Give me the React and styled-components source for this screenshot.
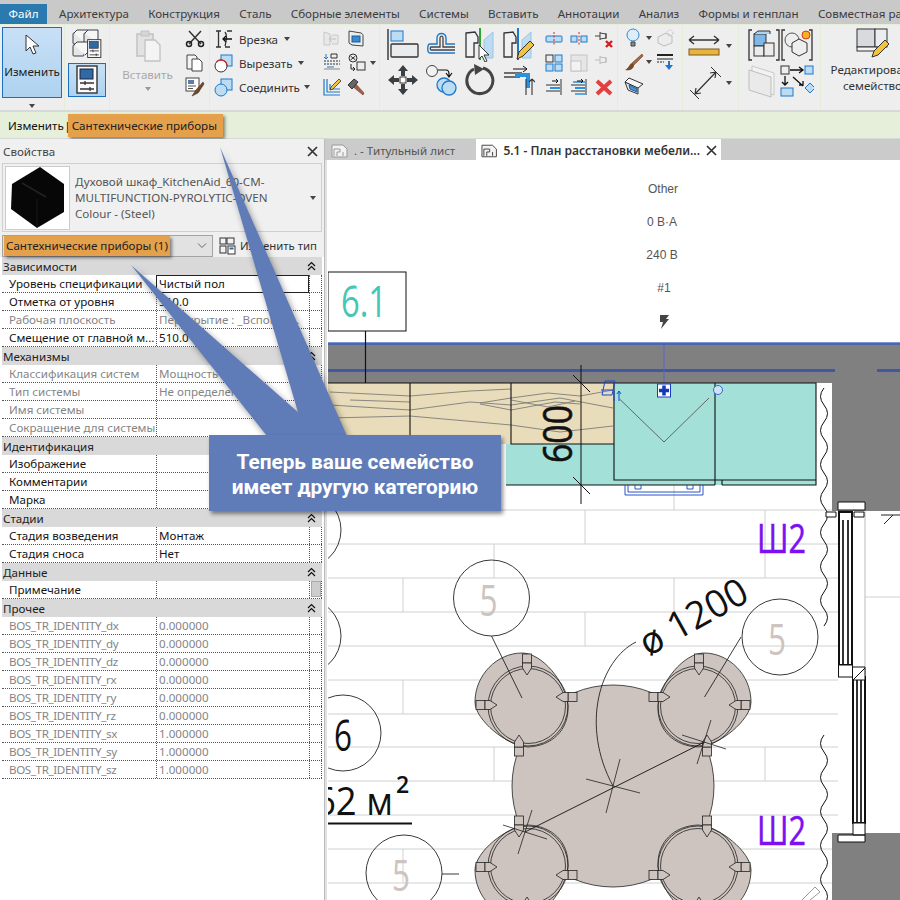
import React from 'react';
import styled, { createGlobalStyle } from 'styled-components';

const UI_FONT = '"Noto Sans", "Open Sans", "Liberation Sans", sans-serif';

const GlobalStyle = createGlobalStyle`
  html, body { margin: 0; padding: 0; background: #fff; }
  body { font-family: ${UI_FONT}; font-size: 12px; color: #222; }
`;

const Page = styled.div`
  position: relative;
  width: 900px;
  height: 900px;
  overflow: hidden;
  background: #fff;
`;

/* ---------- menu ---------- */
const MenuBar = styled.div`
  display: flex;
  align-items: flex-end;
  gap: 19.2px;
  height: 24px;
  background: #c9c9c9;
  white-space: nowrap;
`;

const MenuItem = styled.div`
  flex: none;
  height: 20px;
  line-height: 20px;
  font-size: 11.6px;
  color: #3c3c3c;
  ${(p) => p.$first && 'width: 47px; margin-right: -7.2px; text-align: center; background: #2a7ab0; color: #fff;'}
`;

/* ---------- ribbon ---------- */
const Ribbon = styled.div`
  display: flex;
  height: 88px;
  background: #eeeeee;
  border-top: 1px solid #e5eed8;
  box-sizing: border-box;
  border-bottom: 2px solid #d8d8d8;
`;

const Group = styled.div`
  flex: none;
  width: ${(p) => p.$w}px;
  box-sizing: border-box;
  display: flex;
  border-right: 1px solid #e4edd8;
  padding-left: ${(p) => p.$pad || 0}px;
  padding-top: ${(p) => p.$top || 0}px;
  gap: ${(p) => p.$gap || 0}px;
  flex-direction: ${(p) => (p.$col ? 'column' : 'row')};
  align-items: ${(p) => (p.$col ? 'center' : 'flex-start')};
`;

const ModifyButton = styled.div`
  width: 60px;
  height: 71px;
  margin-top: 2px;
  box-sizing: border-box;
  border: 1px solid #1a6fc0;
  background: linear-gradient(#c8e0f6, #aed2f0);
  display: flex;
  flex-direction: column;
  align-items: center;
  padding-top: 6px;
  gap: 8px;
  font-size: 11.6px;
  color: #222;
`;

const PropsButton = styled.div`
  width: 38px;
  height: 34px;
  margin-top: 5px;
  box-sizing: border-box;
  border: 1px solid #1a6fc0;
  background: linear-gradient(#c8e0f6, #aed2f0);
  display: flex;
  align-items: center;
  justify-content: center;
`;

const Caret = styled.span`
  flex: none;
  display: inline-block;
  width: 0;
  height: 0;
  border-left: 3.5px solid transparent;
  border-right: 3.5px solid transparent;
  border-top: 4px solid ${(p) => p.$color || '#444'};
  margin: ${(p) => p.$m || '0'};
`;

const PasteColumn = styled.div`
  width: 47px;
  margin: 5px 0 0 14px;
  display: flex;
  flex-direction: column;
  align-items: center;
  color: #a8a8a8;
  font-size: 11.6px;
  gap: 5px;
`;

const ToolColumn = styled.div`
  display: flex;
  flex-direction: column;
  align-items: ${(p) => p.$align || 'center'};
  width: ${(p) => p.$w || 20}px;
  margin-left: ${(p) => p.$ml || 0}px;
  padding-top: ${(p) => p.$top ?? 4}px;
  gap: ${(p) => p.$gap ?? 4}px;
`;

const ToolRow = styled.div`
  display: flex;
  align-items: center;
  height: ${(p) => p.$h || 20}px;
  gap: ${(p) => p.$gap || 0}px;
  font-size: 11.6px;
  color: #333;
  white-space: nowrap;
`;

const ToolLabel = styled.span`
  margin: 0 4px 0 5px;
`;

const IconGrid = styled.div`
  display: grid;
  grid-template-columns: ${(p) => p.$cols};
  grid-auto-rows: ${(p) => p.$row}px;
  place-items: center;
  padding-top: ${(p) => p.$top || 0}px;
  margin-left: ${(p) => p.$ml || 0}px;
`;

const EditFamily = styled.div`
  width: 96px;
  margin-left: 4px;
  padding-top: 3px;
  display: flex;
  flex-direction: column;
  align-items: center;
  gap: 4px;
  text-align: center;
  font-size: 11.6px;
  line-height: 16px;
  color: #333;
  white-space: nowrap;
`;

/* ---------- options bar ---------- */
const OptionsBar = styled.div`
  display: flex;
  align-items: center;
  height: 27px;
  padding-left: 8px;
  background: #e6efd9;
  border-bottom: 1px solid #d8d8d8;
  box-sizing: border-box;
  font-size: 11.6px;
  color: #111;
  white-space: nowrap;
  word-spacing: -2.5px;
`;

const OrangeTag = styled.span`
  display: inline-flex;
  align-items: center;
  height: ${(p) => p.$h}px;
  width: ${(p) => p.$w}px;
  box-sizing: border-box;
  margin-left: ${(p) => p.$ml || 0}px;
  padding-left: ${(p) => p.$pad || 4}px;
  background: #e4a04b;
  color: #222;
  box-shadow: 2px 2px 3px rgba(0, 0, 0, 0.45);
  white-space: nowrap;
  flex: none;
  word-spacing: normal;
`;

const Workspace = styled.div`
  display: flex;
  height: 761px;
`;

/* ---------- properties panel ---------- */
const Panel = styled.aside`
  flex: none;
  width: 325px;
  height: 100%;
  box-sizing: border-box;
  border-right: 1px solid #bbb;
  background: #fff;
`;

const PanelHead = styled.div`
  height: 24px;
  display: flex;
  align-items: center;
  justify-content: space-between;
  padding: 0 6px 0 3px;
  background: #f0f0f0;
  color: #444;
  font-size: 11.6px;
`;

const PanelTop = styled.div`
  background: #f0f0f0;
  padding: 0 2px 2px;
  height: 94px;
  box-sizing: border-box;
`;

const TypeBox = styled.div`
  height: 69px;
  box-sizing: border-box;
  display: flex;
  align-items: center;
  gap: 5px;
  padding-left: 2px;
  width: 320px;
  border: 1px solid #d0d0d0;
  color: #555;
  font-size: 11.6px;
  line-height: 16px;
`;

const Thumb = styled.div`
  flex: none;
  width: 65px;
  height: 64px;
  background: #fff;
  border: 1px solid #ccc;
  box-sizing: border-box;
  display: flex;
  align-items: center;
  justify-content: center;
`;

const TypeName = styled.div`
  flex: 1;
  white-space: nowrap;
  overflow: hidden;
`;

const SelectorRow = styled.div`
  display: flex;
  align-items: center;
  height: 23px;
  margin-top: 2px;
  gap: 6px;
`;

const Selector = styled.div`
  width: 211px;
  height: 22px;
  box-sizing: border-box;
  border: 1px solid #a4a4a4;
  background: #e2e2e2;
  display: flex;
  align-items: center;
  justify-content: space-between;
  padding: 0 4px 0 1px;
  font-size: 11.6px;
`;

const EditType = styled.div`
  display: flex;
  align-items: center;
  gap: 4px;
  font-size: 11.4px;
  color: #333;
  white-space: nowrap;
`;

const PropTable = styled.div`
  width: 320px;
  margin-left: 2px;
`;

const Section = styled.div`
  height: 18px;
  box-sizing: border-box;
  background: #d9d9d9;
  display: flex;
  align-items: center;
  justify-content: space-between;
  padding: 0 6px 0 1px;
  font-size: 11.6px;
  color: #222;
`;

const Row = styled.div`
  display: grid;
  grid-template-columns: 154px 153px 13px;
  height: 18px;
  box-sizing: border-box;
  border-bottom: 1px dotted #555;
  font-size: 11.6px;
  line-height: 17px;
  color: ${(p) => (p.$dim ? '#858585' : '#151515')};
  white-space: nowrap;
`;

const LabelCell = styled.div`
  padding-left: 7px;
  overflow: hidden;
  letter-spacing: ${(p) => (p.$tight ? '-0.38px' : 'normal')};
`;

const ValueCell = styled.div`
  border-left: 1px dotted #555;
  padding-left: 2px;
  overflow: hidden;
  ${(p) => p.$active && 'border: 1px solid #222; line-height: 15px; height: 18px; box-sizing: border-box; background: #fff; color: #111;'}
`;

const EdgeCell = styled.div`
  border-left: 1px dotted #555;
  border-right: 1px dotted #555;
  display: flex;
  justify-content: center;
`;

const ScrollThumb = styled.div`
  width: 10px;
  height: 16px;
  background: #cdcdcd;
  border: 1px solid #aaa;
  box-sizing: border-box;
`;

/* ---------- canvas ---------- */
const ViewArea = styled.section`
  flex: 1;
  min-width: 0;
  display: flex;
  flex-direction: column;
`;

const TabStrip = styled.div`
  flex: none;
  height: 21px;
  display: flex;
  background: #cbcbcb;
  padding-left: 4px;
  gap: 6px;
  font-size: 11.6px;
  white-space: nowrap;
`;

const Tab = styled.div`
  width: ${(p) => p.$w}px;
  box-sizing: border-box;
  display: flex;
  align-items: center;
  gap: 6px;
  padding: 2px 0 0 ${(p) => (p.$active ? 5 : 2)}px;
  background: ${(p) => (p.$active ? '#fff' : 'transparent')};
  color: ${(p) => (p.$active ? '#333' : '#555')};
  font-weight: ${(p) => (p.$active ? 600 : 400)};
  font-size: ${(p) => (p.$active ? 12 : 11.6)}px;
`;

const CloseMark = styled.span`
  margin-left: auto;
  margin-right: 4px;
  display: inline-flex;
`;

const Drawing = styled.svg`
  display: block;
  flex: none;
`;

/* ---------- callout overlay ---------- */
const Wedges = styled.svg`
  position: absolute;
  left: 0;
  top: 0;
  pointer-events: none;
  filter: drop-shadow(2px 3px 3px rgba(0, 0, 0, 0.4));
`;

const Callout = styled.div`
  position: absolute;
  left: 209px;
  top: 435px;
  width: 292px;
  height: 76px;
  box-sizing: border-box;
  padding-top: 3px;
  display: flex;
  align-items: center;
  justify-content: center;
  text-align: center;
  background: #5f7cb8;
  color: #fff;
  font-family: Roboto, "Liberation Sans", sans-serif;
  font-size: 20.8px;
  font-weight: 700;
  line-height: 25px;
  white-space: nowrap;
  box-shadow: 2px 3px 4px rgba(0, 0, 0, 0.45);
`;

/* ---------- icons ---------- */
const Ico = ({ w = 20, h = w, children }) => (
  <svg width={w} height={h} viewBox={`0 0 ${w} ${h}`} fill="none">
    {children}
  </svg>
);

const DK = '#3a3f44';
const BL = '#1f78c8';
const LB = '#bcdcf4';
const GR = '#e4e6e8';

const Cube = ({ x, y, s = 11, fill = GR }) => (
  <g stroke={DK} strokeWidth="1" fill={fill}>
    <rect x={x} y={y} width={s} height={s} rx="1" />
    <path d={`M${x + 1} ${y}l3-3h${s}v${s - 1}l-3 3`} fill="#f6f6f6" />
  </g>
);

const CursorIcon = () => (
  <Ico w={16} h={22}>
    <path d="M2 1v16l4-4 3 7 3-1-3-7h6z" fill="#fff" stroke="#333" />
  </Ico>
);

const SheetSliders = ({ s = 1 }) => (
  <g transform={`scale(${s})`}>
    <rect x="1" y="1" width="20" height="27" fill="#fafafa" stroke="#333" strokeWidth="1.4" />
    <rect x="4" y="4" width="13" height="10" fill="#2f6aa8" stroke="#223" />
    <path d="M4 18h14M4 24h14M9 16v4M14 22v4" stroke="#333" strokeWidth="1.3" />
  </g>
);

const BlocksProps = () => (
  <Ico w={30} h={30}>
    <Cube x={1} y={5} />
    <Cube x={12} y={5} s={10} />
    <Cube x={1} y={17} />
    <g transform="translate(15 11)">
      <SheetSliders s={0.66} />
    </g>
  </Ico>
);

const SmallBlocksProps = () => (
  <Ico w={17} h={18}>
    <rect x="1" y="1" width="6" height="6" fill="#f2f2f2" stroke="#333" />
    <rect x="8" y="1" width="7" height="6" fill="#f2f2f2" stroke="#333" />
    <rect x="1" y="9" width="6" height="7" fill="#f2f2f2" stroke="#333" />
    <rect x="9" y="9" width="7" height="8" fill="#fff" stroke="#333" />
    <rect x="10.500" y="10.500" width="4" height="2" fill="#2f6aa8" />
  </Ico>
);

const PropsIcon = () => (
  <Ico w={23} h={30}>
    <SheetSliders />
  </Ico>
);

const PasteIcon = () => (
  <Ico w={26} h={32}>
    <path d="M2 4h16v22H2z" fill="#e2e2e2" stroke="#c2c2c2" strokeWidth="1.5" />
    <path d="M6 1h8v5H6z" fill="#d6d6d6" stroke="#c2c2c2" />
    <path d="M10 10h10l5 5v16H10z" fill="#f4f4f4" stroke="#c2c2c2" strokeWidth="1.3" />
  </Ico>
);

const CutIcon = () => (
  <Ico>
    <path d="M4 2l12 13M16 2L4 15" stroke="#333" strokeWidth="1.5" />
    <circle cx="4" cy="15" r="2.5" stroke="#222" strokeWidth="1.5" />
    <circle cx="16" cy="15" r="2.5" stroke="#222" strokeWidth="1.5" />
  </Ico>
);

const CopyIcon = () => (
  <Ico>
    <path d="M2 2h8l2 2v12H2z" fill="#f4f4f4" stroke="#444" />
    <path d="M7 6h7l3 3v9H7z" fill="#fff" stroke="#444" />
  </Ico>
);

const MatchIcon = () => (
  <Ico>
    <rect x="1" y="1" width="13" height="13" fill="#fff" stroke="#444" />
    <rect x="3" y="3" width="6" height="4" fill="#5a7ea8" />
    <path d="M3 9h8M3 11.5h5" stroke="#555" />
    <path d="M18 5l-7 8-4 6 6-3 6-9z" fill="#6b4a2c" stroke="#4a3420" strokeWidth=".6" />
  </Ico>
);

const NotchIcon = () => (
  <Ico>
    <path d="M2 2h5M4.5 2v16M2 18h5M13 2h5M11 18h5M11 3c3 4 1 10 0 14" stroke="#333" strokeWidth="1.3" />
    <path d="M18 10H9M12 7l-3 3 3 3" stroke="#111" strokeWidth="1.3" />
  </Ico>
);

const CutShapeIcon = () => (
  <Ico>
    <rect x="7" y="2" width="11" height="11" fill="#bcdcf4" stroke={BL} />
    <circle cx="7" cy="13" r="6" fill="#fff" stroke="#333" />
    <path d="M2.5 9A6 6 0 0 1 13 13" stroke="#d22" strokeWidth="1.2" />
  </Ico>
);

const JoinIcon = () => (
  <Ico>
    <rect x="7" y="2" width="11" height="11" fill={LB} stroke={BL} />
    <circle cx="7" cy="13" r="6" fill={LB} stroke={BL} />
  </Ico>
);

const WallOpeningIcon = () => (
  <Ico>
    <path d="M2 3l6 2v11H2z M10 6h6v9h-6" fill="#e8e8e8" stroke="#c8c8c8" />
    <path d="M14 10H7M10 7l-3 3 3 3" stroke="#c0c0c0" />
  </Ico>
);

const WindowFaceIcon = () => (
  <Ico>
    <path d="M3 2l12 2c2 1 2 2 2 3v10L6 16l-3-2z" fill="#eee" stroke="#444" />
    <rect x="6" y="7" width="8" height="6" fill="#3a8ad0" stroke="#1a5a98" />
  </Ico>
);

const DatumIcon = () => (
  <Ico>
    <path d="M2 8h16M2 11h16" stroke="#333" strokeDasharray="2 1" />
    <path d="M4 1v5M2 4l2 2 2-2M5 14h7" stroke={BL} />
    <path d="M9 1h6v4H9z" stroke="#333" />
    <path d="M2 16h16" stroke="#888" />
  </Ico>
);

const GearBoxIcon = () => (
  <Ico>
    <circle cx="6" cy="5" r="4" stroke="#333" />
    <path d="M3.5 3l5 4M8.5 3l-5 4" stroke="#333" />
    <rect x="10" y="9" width="8" height="8" fill="#eee" stroke="#333" />
    <path d="M4 11v5h4M6 14l2 2-2 2" stroke="#222" />
  </Ico>
);

const ListPenIcon = () => (
  <Ico>
    <path d="M2 2v16h16M5 2v13h13M8 7v5h10" stroke={BL} strokeWidth="1.2" />
    <path d="M17 2l2 2-8 8-3 1 1-3z" fill="#f3c33e" stroke="#333" strokeWidth=".8" />
  </Ico>
);

const HammerIcon = () => (
  <Ico>
    <path d="M6 9l11 9 1-2L9 6" fill="#a0604a" stroke="#6a3a2a" strokeWidth=".6" />
    <path d="M2 8l6-6 4 3-6 7z" fill="#666" stroke="#333" />
  </Ico>
);

const AlignIcon = () => (
  <Ico w={32} h={32}>
    <path d="M1 0v31" stroke="#222" strokeWidth="1.3" />
    <rect x="4" y="2" width="12" height="10" fill={LB} stroke={BL} />
    <rect x="4" y="15" width="27" height="13" rx="1" fill="#e9ebed" stroke="#333" strokeWidth="1.3" />
  </Ico>
);

const OffsetIcon = () => (
  <Ico w={32} h={32}>
    <path d="M30 15H21V9c0-6-9-6-9 0v6H5c-3 0-3 9 0 9h25" stroke={BL} strokeWidth="1.4" />
    <path d="M30 18H18V9c0-2.500-3-2.500-3 0v9H6c-1 0-1 3 0 3h24" stroke="#444" strokeWidth="1.3" />
  </Ico>
);

const Profile = ({ x }) => (
  <path d={`M${x} 5l9-1 3 5v6h-4v14h-8z`} fill="#f0f1f2" stroke="#333" strokeWidth="1.3" />
);

const MirrorPickIcon = () => (
  <Ico w={32} h={34}>
    <Profile x={2} />
    <path d="M16 0v32" stroke="#2fa52f" strokeWidth="2" />
    <path d="M20 12l9-8v26h-9z" fill={LB} stroke="#9cc4e4" />
    <path d="M15 17v14l3-3 3 6 2-1-3-6h5z" fill="#fff" stroke="#333" />
  </Ico>
);

const MirrorDrawIcon = () => (
  <Ico w={32} h={34}>
    <Profile x={1} />
    <path d="M15 0v32" stroke={BL} strokeWidth="2" />
    <path d="M19 12l9-8v26h-9z" fill={LB} stroke="#9cc4e4" />
    <path d="M14 31l2-7 11-11 4 4-11 11z" fill="#f3c33e" stroke="#333" />
  </Ico>
);

const MoveIcon = () => (
  <Ico w={32} h={32}>
    <path d="M16 1l5 6h-3v5h-4V7h-3zM16 31l5-6h-3v-5h-4v5h-3zM1 16l6-5v3h5v4H7v3zM31 16l-6-5v3h-5v4h5v3z" fill="#3a3f44" />
    <rect x="13" y="13" width="6" height="6" fill="#fff" stroke="#333" />
  </Ico>
);

const CopyCircleIcon = () => (
  <Ico w={32} h={32}>
    <circle cx="7" cy="7" r="5.500" fill="#f2f2f2" stroke="#444" />
    <path d="M13 6h8q3 0 3 4v2M21 9l3 4 3-4" stroke="#111" strokeWidth="1.2" />
    <circle cx="19" cy="21" r="7" fill={LB} stroke={BL} strokeWidth="1.3" />
    <circle cx="24" cy="24" r="7" fill={LB} stroke={BL} strokeWidth="1.3" />
  </Ico>
);

const RotateIcon = () => (
  <Ico w={32} h={32}>
    <path d="M10 5a13 13 0 1 0 9-1" stroke="#444" strokeWidth="3" />
    <path d="M10 0l10 5-9 6z" fill="#444" />
  </Ico>
);

const TrimIcon = () => (
  <Ico w={32} h={30}>
    <path d="M1 8h18M1 12h16" stroke="#444" strokeWidth="1.3" />
    <path d="M10 4h14M24 4l-4-3M24 4l-4 3" stroke="#111" />
    <path d="M12 10h13v13" stroke="#2a90e0" strokeWidth="4" />
    <path d="M23 14v16M29 30V14M29 14l-3 3M29 14l3 3" stroke="#333" strokeWidth="1.1" />
  </Ico>
);

const SplitIcon = () => (
  <Ico>
    <rect x="2" y="7" width="16" height="6" rx="1" fill={LB} stroke={BL} />
    <path d="M10 3v14" stroke="#d22" strokeDasharray="2 1.500" />
  </Ico>
);

const SplitGapIcon = () => (
  <Ico>
    <rect x="2" y="7" width="6" height="6" fill={LB} stroke={BL} />
    <rect x="12" y="7" width="6" height="6" fill={LB} stroke={BL} />
    <path d="M10 3v14" stroke="#d22" strokeDasharray="2 1.500" />
  </Ico>
);

const PinX = ({ faded }) => (
  <Ico>
    <path d="M1 7h5M6 3v8M6 4l6 1v4l-6 1M12 4v6" stroke={faded ? '#bbb' : '#444'} />
    {!faded && <path d="M12 12l6 6M18 12l-6 6" stroke="#d02020" strokeWidth="2.4" />}
  </Ico>
);

const ArrayIcon = () => (
  <Ico>
    <rect x="2" y="2" width="7" height="7" stroke="#333" />
    <rect x="11" y="2" width="7" height="7" fill={LB} stroke={BL} />
    <rect x="2" y="11" width="7" height="7" fill={LB} stroke={BL} />
    <rect x="11" y="11" width="7" height="7" fill={LB} stroke={BL} />
  </Ico>
);

const ScaleIcon = () => (
  <Ico>
    <rect x="2" y="2" width="16" height="16" fill="#e6e6e6" stroke="#c4c4c4" />
    <rect x="2" y="8" width="10" height="10" fill="#f2f2f2" stroke="#c4c4c4" />
  </Ico>
);

const AlignLinesIcon = ({ dense }) => (
  <Ico>
    <path d="M17 2v16" stroke="#333" />
    <path d="M2 8h14M2 14h14" stroke="#333" />
    <path d="M6 11h10" stroke="#2a90e0" strokeWidth="2" />
    {dense && <path d="M4 5h12M6 17h10" stroke="#2a90e0" strokeWidth="1.500" />}
    <path d="M8 4h6M14 4l-2-2M14 4l-2 2" stroke="#111" />
  </Ico>
);

const DeleteIcon = () => (
  <Ico>
    <path d="M3 4l14 13M17 4L3 17" stroke="#e24040" strokeWidth="4" />
  </Ico>
);

const BulbIcon = () => (
  <Ico>
    <circle cx="9" cy="7" r="6" fill="#dcedfb" stroke="#3a88c8" />
    <path d="M7 14h4v4H7z" fill="#888" stroke="#444" />
  </Ico>
);

const GhostBoxIcon = () => (
  <Ico>
    <path d="M3 9l8-4 6 3v7l-8 3-6-3z" fill="#ececec" stroke="#bdbdbd" />
    <circle cx="15" cy="5" r="3" stroke="#c4c4c4" strokeDasharray="1.500 1" />
  </Ico>
);

const BrushIcon = () => (
  <Ico>
    <path d="M18 2L8 11l2 2 9-9z" fill="#a86a3a" stroke="#6a3a2a" strokeWidth=".6" />
    <path d="M8 11c-3 1-3 5-7 7 5 1 9-1 9-5z" fill="#7a4b28" />
  </Ico>
);

const LineWeightIcon = () => (
  <Ico>
    <path d="M2 3h16" stroke="#222" strokeWidth="2" />
    <path d="M2 7h16" stroke="#222" />
    <path d="M2 10h7" stroke="#222" strokeDasharray="2 1" />
    <path d="M14 9v7" stroke={BL} strokeWidth="2" />
    <path d="M10 13l4 5 4-5z" fill={BL} />
  </Ico>
);

const SectionBoxIcon = () => (
  <Ico w={20} h={18}>
    <path d="M1 5l13 6v6L4 13z" fill="#eee" stroke="#333" />
    <path d="M1 5l4-4 14 6-5 4z" fill="#f5f5f5" stroke="#333" />
    <path d="M5 8l8 4v3l-7-3z" fill="#4a96d8" stroke="#1a5a98" />
  </Ico>
);

const RulerIcon = () => (
  <Ico w={32} h={24}>
    <path d="M1 6h30M1 6l5-4M1 6l5 4M31 6l-5-4M31 6l-5 4" stroke="#333" strokeWidth="1.4" />
    <rect x="1" y="15" width="30" height="6" fill="#e8b33e" stroke="#7a5a18" />
  </Ico>
);

const AlignedDimIcon = () => (
  <Ico w={34} h={34}>
    <path d="M2 24l9 9M23 1l10 10" stroke="#333" />
    <path d="M7 28L28 6M7 28l1-6M7 28l6-1M28 6l-6 1M28 6l-1 6" stroke="#333" strokeWidth="1.2" />
  </Ico>
);

const ModelInPlaceIcon = () => (
  <Ico w={32} h={32}>
    <path d="M4 1H1v30h3M28 1h3v30h-3" stroke="#333" strokeWidth="1.3" />
    <rect x="6" y="5" width="12" height="12" fill="#7db8e8" stroke="#333" />
    <path d="M6 5l4-3h12v3" fill="#aed2f0" stroke="#333" />
    <rect x="6" y="17" width="10" height="10" fill="#ebebeb" stroke="#333" />
    <rect x="16" y="14" width="10" height="13" fill="#ebebeb" stroke="#333" />
  </Ico>
);

const GroupStarIcon = () => (
  <Ico w={32} h={32}>
    <path d="M4 1H1v30h3M28 1h3v30h-3" stroke="#333" strokeWidth="1.3" />
    <circle cx="11" cy="11" r="7" fill="#eee" stroke="#555" />
    <path d="M11 14l7-4 8 4v9l-8 4-7-4z" fill="#eee" stroke="#333" />
    <circle cx="25" cy="6" r="4" fill="#f5b324" stroke="#d23a1a" />
  </Ico>
);

const PlanesIcon = () => (
  <Ico w={32} h={34}>
    <path d="M4 2l22 7v22L4 24z" fill="#f2f2f2" stroke="#c8c8c8" />
    <path d="M1 6l22 7v20L1 26z" fill="#eaeaea" stroke="#bdbdbd" />
  </Ico>
);

const FlowIcon = () => (
  <Ico w={34} h={34}>
    <rect x="1" y="2" width="8" height="8" fill="#eee" stroke="#333" />
    <rect x="25" y="2" width="8" height="8" fill={LB} stroke={BL} />
    <rect x="1" y="24" width="12" height="8" fill={LB} stroke={BL} />
    <path d="M25 24l5-5 5 5-5 5z" fill={LB} stroke={BL} />
    <path d="M10 6h13M19 3l4 3-4 3M5 12v9M2 18l3 3 3-3M13 13l10 9M19 21h4v-4" stroke="#111" strokeWidth="1.3" />
  </Ico>
);

const EditFamilyIcon = () => (
  <Ico w={34} h={30}>
    <rect x="1" y="1" width="18" height="18" fill="#d8dadd" stroke="#333" />
    <rect x="19" y="1" width="12" height="18" fill="#ecedee" stroke="#333" />
    <rect x="1" y="19" width="20" height="4" fill="#f4f4f4" stroke="#333" />
    <path d="M16 29l2-6 11-11 4 4-11 11z" fill="#f3c33e" stroke="#333" />
  </Ico>
);

const OvenIcon = () => (
  <Ico w={56} h={62}>
    <path d="M30 0L2 17 1 42 27 61 54 45 54 17Z" fill="#070707" />
    <path d="M12 16L36 30" stroke="#222" strokeWidth="1.500" />
    <path d="M27 32V60" stroke="#181818" />
  </Ico>
);

const Chevrons = () => (
  <Ico w={9} h={10}>
    <path d="M1 5l3.500-3.500L8 5M1 9l3.500-3.500L8 9" stroke="#111" strokeWidth="1.2" />
  </Ico>
);

const ChevronDown = () => (
  <Ico w={12} h={8}>
    <path d="M2 1.500l4 4 4-4" stroke="#666" />
  </Ico>
);

const CrossIcon = ({ s = 11 }) => (
  <Ico w={s} h={s}>
    <path d={`M1 1L${s - 1} ${s - 1}M${s - 1} 1L1 ${s - 1}`} stroke="#333" strokeWidth="1.700" />
  </Ico>
);

const SheetTabIcon = ({ color }) => (
  <Ico w={17} h={14}>
    <path d="M1 1h11l4 4v8H1z" stroke={color} fill="#f2f2f2" />
    <path d="M3 12V5h6v3H6v4M12 12V8" stroke={color} />
  </Ico>
);

/* ---------- plan drawing ---------- */
const waveLine = (x, y0, y1) => {
  let d = `M${x} ${y0}`;
  let dir = -1;
  for (let y = y0; y < y1; y += 17) {
    d += ` q${dir * 7} 8.500 0 17`;
    dir = -dir;
  }
  return d;
};

const TILE_Y = [510, 544, 578, 612, 646, 680, 714, 747, 781, 815, 849, 883];
const TILE_V = [
  [585, 510, 544], [674, 485, 510], [765, 510, 544], [494, 544, 578], [765, 544, 578],
  [403, 578, 612], [674, 578, 612], [585, 612, 646], [403, 680, 714],
  [494, 747, 781], [765, 747, 781], [403, 849, 883], [674, 849, 883],
];

const TAGS = [
  { cx: 491.5, cy: 598, t: '5' },
  { cx: 780, cy: 637, t: '5' },
  { cx: 404, cy: 873, t: '5' },
  { cx: 343, cy: 733, t: '6', dark: true },
  { cx: 303, cy: 530 },
  { cx: 303, cy: 636 },
];

const CHAIRS = [
  { x: 522, y: 700, sx: 1, sy: 1 },
  { x: 704, y: 700, sx: -1, sy: 1 },
  { x: 522, y: 872, sx: 1, sy: -1 },
  { x: 704, y: 872, sx: -1, sy: -1 },
];

const Leg = ({ x, y, rot }) => (
  <g transform={`translate(${x} ${y}) rotate(${rot})`} fill="#cdc4bf" stroke="#222" strokeWidth="0.8">
    <rect x="0" y="-4.500" width="9" height="9" />
    <path d="M9-4.500h5l7 4.500-7 4.500h-5z" />
  </g>
);

const Chair = ({ x, y, sx, sy }) => (
  <g transform={`translate(${x} ${y}) scale(${sx} ${sy})`}>
    <path
      d="M0-47C20-47 44-18 46 6 47 30 30 46 6 47-15 46-47 20-47 2-47-25-25-47 0-47Z"
      fill="#cdc4bf"
      stroke="#222"
      strokeWidth="0.8"
    />
    <circle cx="6" cy="6" r="40" fill="none" stroke="#222" strokeWidth="0.8" />
    <circle cx="6" cy="6" r="37.500" fill="none" stroke="#222" strokeWidth="0.8" />
    <Leg x={5} y={-46} rot={90} />
    <Leg x={-46} y={5} rot={0} />
    <Leg x={55} y={-3} rot={180} />
    <Leg x={-3} y={56} rot={-90} />
  </g>
);

const Star = ({ x, y, r = 27 }) => (
  <path
    d={`M${x - r} ${y - 7}L${x + r} ${y + 7}M${x + 7} ${y - r}L${x - 7} ${y + r}`}
    stroke="#222"
    strokeWidth="0.8"
  />
);

const Plan = () => (
  <Drawing width="575" height="740" viewBox="325 160 575 740">
    {TILE_Y.map((y) => (
      <path key={y} d={`M328 ${y}H838`} stroke="#d0d0d0" strokeWidth="1" />
    ))}
    {TILE_V.map(([x, a, b]) => (
      <path key={`${x}-${a}`} d={`M${x} ${a}V${b}`} stroke="#d0d0d0" strokeWidth="1" />
    ))}
    <path d="M865 597H900" stroke="#d0d0d0" />
    <path d="M865 511V835" stroke="#bbb" />

    <g fontFamily="Liberation Sans, sans-serif" fontSize="12" fill="#555" textAnchor="middle">
      <text x="663" y="193">Other</text>
      <text x="662" y="226">0 В·А</text>
      <text x="662" y="259">240 В</text>
      <text x="664" y="292">#1</text>
    </g>
    <path d="M660 315h9l-3 4h3l-8 10 2-7h-3z" fill="#444" />

    <rect x="328" y="272" width="78" height="59" fill="#fff" stroke="#111" />
    <text x="341" y="317" fontFamily="Open Sans, sans-serif" fontSize="43" textLength="46" lengthAdjust="spacingAndGlyphs" fill="#45c6b6">6.1</text>

    <path d="M328 343H900V511H832V383H328Z" fill="#808080" />
    <rect x="328" y="342" width="572" height="3" fill="#4a66b0" />
    <rect x="328" y="342" width="572" height="1" fill="#7f95cc" />
    <rect x="328" y="369" width="507" height="3" fill="#3f58a0" />
    <rect x="877" y="369" width="23" height="3" fill="#3f58a0" />
    <path d="M664 345V384" stroke="#5a62d0" />
    <path d="M365.500 331V383" stroke="#111" strokeWidth="1.200" />

    <rect x="328" y="383" width="286" height="61" fill="#e9dcbb" />
    <rect x="506" y="444" width="108" height="41" fill="#a2e0d8" />
    <rect x="614" y="383" width="202" height="102" fill="#a2e0d8" />
    <path
      d="M330 392L410 396 470 391 511 389M330 405L410 410 470 402 511 405 560 398 613 408M330 418L410 416 511 425 560 432 613 426M350 400L410 402M480 403L511 398 548 393 580 396 613 390M480 404L511 410 555 402 580 404M511 400L548 407 575 401"
      fill="none"
      stroke="#7d7d78"
      strokeWidth="0.9"
    />
    <path
      d="M328 383H816V480H614V383M410 383V444M511 383V444H614M715 383V485M506 485H715M722 485H816V480M722 480V485"
      fill="none"
      stroke="#111"
      strokeWidth="1.100"
    />
    <path d="M619.500 399L664 442 709 398" fill="none" stroke="#666" strokeWidth="1" />

    <path d="M625 485v10h78v-10M628 485v7h72v-7M635 485v4h6v-4M687 485v4h6v-4" fill="none" stroke="#2a52c8" />
    <rect x="657.500" y="384" width="13" height="13" fill="#fff" stroke="#1a3ac8" />
    <path d="M664 385.500v10M659 390.500h10" stroke="#1238b8" strokeWidth="3.500" />
    <circle cx="718" cy="390" r="4.500" fill="#cfe3f8" stroke="#3a6ad8" />
    <path d="M605 381h10l-3 14h-10zM601 390h12" fill="none" stroke="#1a4ad0" />
    <path d="M614 391v10M619 391v10M619 391l-2 3M619 391l2 3" stroke="#1a4ad0" fill="none" />

    <path d="M581 365V504M573 375L590 392M573 477L590 494" stroke="#111" strokeWidth="1" />
    <text
      transform="translate(572 463) rotate(-90)"
      fontFamily="Open Sans, sans-serif"
      fontSize="41"
      textLength="58"
      lengthAdjust="spacingAndGlyphs"
      fill="#111"
      stroke="#111"
      strokeWidth="0.6"
    >
      600
    </text>

    <path d={waveLine(824, 388, 625)} fill="none" stroke="#111" />
    <path d={waveLine(824, 735, 900)} fill="none" stroke="#111" />

    <path d="M838 502H865V510H838ZM826 512h10v5h-10zM854 512h10v5h-10z" fill="#fff" stroke="#111" />
    <rect x="839" y="512" width="13" height="153" fill="#fff" stroke="#111" strokeWidth="2" />
    <path d="M843 520V665M848 520V665" stroke="#111" strokeWidth="1.700" />
    <rect x="838.500" y="665" width="14" height="12" fill="#fff" stroke="#111" />
    <rect x="853" y="677" width="12" height="146" fill="#fff" stroke="#111" strokeWidth="2" />
    <path d="M857 680V823M861 680V823" stroke="#111" strokeWidth="1.700" />
    <path d="M852.500 667H865V680H852.500ZM853 680L865 668" fill="#fff" stroke="#111" />
    <path d="M832 833H900V900H832Z" fill="#808080" />
    <path d="M853 823H865V835H853ZM838 835H865V842H838Z" fill="#fff" stroke="#111" />
    <path d="M802 900L815 887 820 892 810 900" fill="none" stroke="#999" />
    <path d="M881 515H900M893 515L884 524" stroke="#222" />

    <text x="757" y="553" fontFamily="Open Sans, sans-serif" fontSize="40" textLength="49" lengthAdjust="spacingAndGlyphs" fill="#7d10f0" stroke="#7d10f0" strokeWidth="0.5">Ш2</text>
    <text x="757" y="845" fontFamily="Open Sans, sans-serif" fontSize="40" textLength="49" lengthAdjust="spacingAndGlyphs" fill="#7d10f0" stroke="#7d10f0" strokeWidth="0.5">Ш2</text>

    <circle cx="613" cy="786" r="101" fill="#cdc4bf" stroke="#222" strokeWidth="0.8" />
    {CHAIRS.map((c) => (
      <Chair key={`${c.x}-${c.y}`} {...c} />
    ))}
    <Star x={613} y={786} />
    <Star x={704} y={742} r={22} />
    <Star x={525} y={832} r={22} />
    <path d="M525 832L704.500 742" stroke="#111" strokeWidth="0.9" />
    <path d="M636 642C600 660 580 725 613 786" fill="none" stroke="#222" strokeWidth="0.9" />
    <path d="M491.500 636L522 698M741 637L704.500 697M442 874H459" stroke="#222" strokeWidth="0.9" />

    {TAGS.map((tag) => (
      <g key={`${tag.cx}-${tag.cy}`}>
        <circle cx={tag.cx} cy={tag.cy} r="38" fill="none" stroke="#222" strokeWidth="0.9" />
        {tag.t && (
          <text
            x={tag.dark ? tag.cx - 9 : tag.cx - 12}
            y={tag.cy + 18}
            fontFamily="Open Sans, sans-serif"
            fontSize="44"
            textLength="18"
            lengthAdjust="spacingAndGlyphs"
            fill={tag.dark ? '#111' : '#cdc4bf'}
          >
            {tag.t}
          </text>
        )}
      </g>
    ))}

    <text x="315" y="815" fontFamily="Open Sans, sans-serif" fontSize="39" textLength="78" lengthAdjust="spacingAndGlyphs" fill="#111">
      62 м
    </text>
    <text x="396" y="793" fontFamily="Open Sans, sans-serif" fontSize="23" fontWeight="600" fill="#111">2</text>
    <path d="M328 823.500H412" stroke="#111" strokeWidth="2" />
    <text
      transform="translate(648 657) rotate(-29)"
      fontFamily="Open Sans, sans-serif"
      fontSize="38"
      textLength="118"
      lengthAdjust="spacingAndGlyphs"
      fill="#111"
    >
      ø 1200
    </text>

    <rect x="325" y="160" width="3" height="740" fill="#fff" />
    <path d="M326 160V900" stroke="#c4c4c4" />
  </Drawing>
);

/* ---------- data ---------- */
const MENU = ['Архитектура', 'Конструкция', 'Сталь', 'Сборные элементы', 'Системы', 'Вставить', 'Аннотации', 'Анализ', 'Формы и генплан', 'Совместная работа'];

const identity = (suffix, value) => ({ label: `BOS_TR_IDENTITY_${suffix}`, value, dim: true, tight: true });

const PROPS = [
  {
    title: 'Зависимости',
    rows: [
      { label: 'Уровень спецификации', value: 'Чистый пол', active: true },
      { label: 'Отметка от уровня', value: '510.0' },
      { label: 'Рабочая плоскость', value: 'Перекрытие : _Вспомог...', dim: true },
      { label: 'Смещение от главной м...', value: '510.0' },
    ],
  },
  {
    title: 'Механизмы',
    rows: [
      { label: 'Классификация систем', value: 'Мощность', dim: true },
      { label: 'Тип системы', value: 'Не определена', dim: true },
      { label: 'Имя системы', dim: true },
      { label: 'Сокращение для системы', dim: true },
    ],
  },
  {
    title: 'Идентификация',
    rows: [{ label: 'Изображение' }, { label: 'Комментарии' }, { label: 'Марка' }],
  },
  {
    title: 'Стадии',
    rows: [
      { label: 'Стадия возведения', value: 'Монтаж' },
      { label: 'Стадия сноса', value: 'Нет' },
    ],
  },
  { title: 'Данные', rows: [{ label: 'Примечание', thumb: true }] },
  {
    title: 'Прочее',
    rows: [
      identity('dx', '0.000000'),
      identity('dy', '0.000000'),
      identity('dz', '0.000000'),
      identity('rx', '0.000000'),
      identity('ry', '0.000000'),
      identity('rz', '0.000000'),
      identity('sx', '1.000000'),
      identity('sy', '1.000000'),
      identity('sz', '1.000000'),
    ],
  },
];

export default function App() {
  return (
    <Page>
      <GlobalStyle />
      <MenuBar>
        <MenuItem $first>Файл</MenuItem>
        {MENU.map((m) => (
          <MenuItem key={m}>{m}</MenuItem>
        ))}
      </MenuBar>

      <Ribbon>
        <Group $w={65} $col>
          <ModifyButton>
            <CursorIcon />
            Изменить
          </ModifyButton>
          <Caret $m="6px 0 0" />
        </Group>
        <Group $w={45} $col $top={3}>
          <BlocksProps />
          <PropsButton>
            <PropsIcon />
          </PropsButton>
        </Group>
        <Group $w={100}>
          <PasteColumn>
            <PasteIcon />
            Вставить
            <Caret $color="#999" />
          </PasteColumn>
          <ToolColumn $ml={14}>
            <CutIcon />
            <CopyIcon />
            <MatchIcon />
          </ToolColumn>
        </Group>
        <Group $w={170} $pad={4}>
          <ToolColumn $w={106} $align="flex-start">
            <ToolRow>
              <NotchIcon />
              <ToolLabel>Врезка</ToolLabel>
              <Caret $m="0 0 0 2px" />
            </ToolRow>
            <ToolRow>
              <CutShapeIcon />
              <ToolLabel>Вырезать</ToolLabel>
              <Caret $m="0 0 0 2px" />
            </ToolRow>
            <ToolRow>
              <JoinIcon />
              <ToolLabel>Соединить</ToolLabel>
              <Caret />
            </ToolRow>
          </ToolColumn>
          <IconGrid $cols="24px 24px" $row={24} $top={2}>
            <WallOpeningIcon />
            <WindowFaceIcon />
            <DatumIcon />
            <ToolRow>
              <GearBoxIcon />
              <Caret $m="0 -10px 0 3px" />
            </ToolRow>
            <ListPenIcon />
            <HammerIcon />
          </IconGrid>
        </Group>
        <Group $w={238} $pad={4} $gap={3}>
          <IconGrid $cols="38px 38px 40px 38px" $row={35} $top={2}>
            <AlignIcon />
            <OffsetIcon />
            <MirrorPickIcon />
            <MirrorDrawIcon />
            <MoveIcon />
            <CopyCircleIcon />
            <RotateIcon />
            <TrimIcon />
          </IconGrid>
          <IconGrid $cols="25px 25px 25px" $row={24} $top={2}>
            <SplitIcon />
            <SplitGapIcon />
            <PinX />
            <ArrayIcon />
            <ScaleIcon />
            <PinX faded />
            <AlignLinesIcon />
            <AlignLinesIcon dense />
            <DeleteIcon />
          </IconGrid>
        </Group>
        <Group $w={65} $pad={6}>
          <IconGrid $cols="20px 10px 22px" $row={24} $top={1}>
            <BulbIcon />
            <Caret />
            <GhostBoxIcon />
            <BrushIcon />
            <Caret />
            <LineWeightIcon />
            <SectionBoxIcon />
          </IconGrid>
        </Group>
        <Group $w={56} $pad={5}>
          <ToolColumn $w={48} $top={9} $gap={8} $align="flex-start">
            <ToolRow $h={24} $gap={6}>
              <RulerIcon />
              <Caret />
            </ToolRow>
            <ToolRow $h={34} $gap={4}>
              <AlignedDimIcon />
              <Caret />
            </ToolRow>
          </ToolColumn>
        </Group>
        <Group $w={82} $pad={9}>
          <IconGrid $cols="32px 34px" $row={36} $top={2}>
            <ModelInPlaceIcon />
            <GroupStarIcon />
            <PlanesIcon />
            <FlowIcon />
          </IconGrid>
        </Group>
        <Group $w={100}>
          <EditFamily>
            <EditFamilyIcon />
            <span>
              Редактировать
              <br />
              семейство
            </span>
          </EditFamily>
        </Group>
      </Ribbon>

      <OptionsBar>
        Изменить |
        <OrangeTag $w={155} $h={23} $ml={-3}>Сантехнические приборы</OrangeTag>
      </OptionsBar>

      <Workspace>
        <Panel>
          <PanelHead>
            Свойства
            <CrossIcon />
          </PanelHead>
          <PanelTop>
            <TypeBox>
              <Thumb>
                <OvenIcon />
              </Thumb>
              <TypeName>
                Духовой шкаф_KitchenAid_60-CM-
                <br />
                MULTIFUNCTION-PYROLYTIC-OVEN
                <br />
                Colour - (Steel)
              </TypeName>
              <Caret $m="0 5px 0 0" />
            </TypeBox>
            <SelectorRow>
              <Selector>
                <OrangeTag $w={166} $h={20} $pad={2}>Сантехнические приборы (1)</OrangeTag>
                <ChevronDown />
              </Selector>
              <EditType>
                <SmallBlocksProps />
                Изменить тип
              </EditType>
            </SelectorRow>
          </PanelTop>
          <PropTable>
            {PROPS.map((group) => (
              <React.Fragment key={group.title}>
                <Section>
                  {group.title}
                  <Chevrons />
                </Section>
                {group.rows.map((row) => (
                  <Row key={row.label} $dim={row.dim}>
                    <LabelCell $tight={row.tight}>{row.label}</LabelCell>
                    <ValueCell $active={row.active}>{row.value}</ValueCell>
                    <EdgeCell>{row.thumb && <ScrollThumb />}</EdgeCell>
                  </Row>
                ))}
              </React.Fragment>
            ))}
          </PropTable>
        </Panel>

        <ViewArea>
          <TabStrip>
            <Tab $w={141}>
              <SheetTabIcon color="#999" />
              . - Титульный лист
            </Tab>
            <Tab $active $w={245}>
              <SheetTabIcon color="#444" />
              5.1 - План расстановки мебели...
              <CloseMark>
                <CrossIcon s={11} />
              </CloseMark>
            </Tab>
          </TabStrip>
          <Plan />
        </ViewArea>
      </Workspace>

      <Wedges width="900" height="900">
        <path d="M220 147L305 436H347Z" fill="#5f7cb8" />
        <path d="M131 265L267 436H325Z" fill="#5f7cb8" />
      </Wedges>
      <Callout>
        Теперь ваше семейство
        <br />
        имеет другую категорию
      </Callout>
    </Page>
  );
}
